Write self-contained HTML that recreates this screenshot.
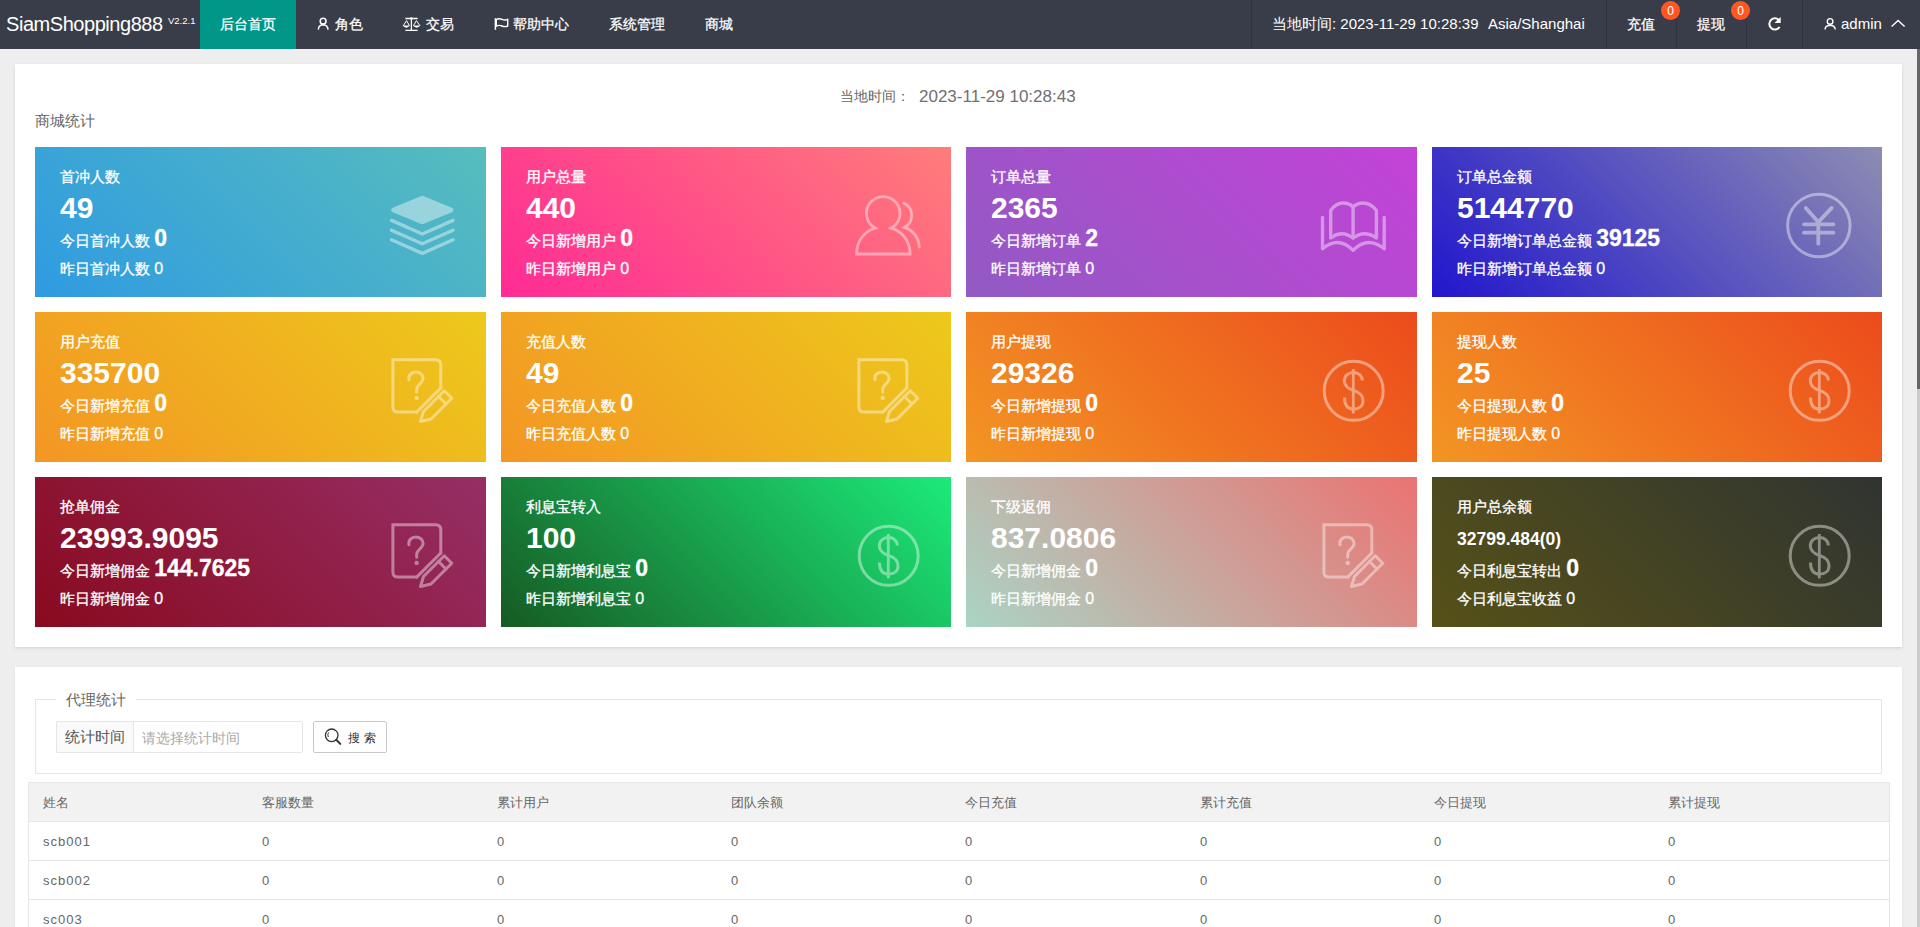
<!DOCTYPE html>
<html><head><meta charset="utf-8">
<style>
*{box-sizing:border-box;margin:0;padding:0}
html,body{width:1920px;height:927px;overflow:hidden;background:#eeeeee;font-family:"Liberation Sans",sans-serif;color:#666}
.abs{position:absolute}
#hdr{position:absolute;left:0;top:0;width:1920px;height:49px;background:#393D49}
#hdr .t{position:absolute;color:#fff;font-size:14px;line-height:16px;white-space:nowrap}
.sep{position:absolute;top:0;width:1px;height:49px;background:#2f323c}
.badge{position:absolute;z-index:2;width:19px;height:19px;border-radius:50%;background:#FF5722;color:#fff;font-size:12px;line-height:21px;text-align:center}
#p1{position:absolute;left:15px;top:64px;width:1887px;height:583px;background:#fff;box-shadow:0 1px 3px rgba(0,0,0,.12)}
#p2{position:absolute;left:15px;top:667px;width:1887px;height:300px;background:#fff;box-shadow:0 1px 3px rgba(0,0,0,.08)}
.card{position:absolute;width:451px;height:150px;color:#fff;overflow:hidden}
.card .ti,.card .l2,.card .l3{-webkit-text-stroke:0.3px #fff}
.card .ti{position:absolute;left:25px;top:22px;font-size:15px;line-height:16px;white-space:nowrap}
.card .num{position:absolute;left:25px;top:45px;font-size:30px;line-height:32px;font-weight:bold;white-space:nowrap}
.card .num.sm{font-size:17.5px;top:46px}
.card .l2{position:absolute;left:25px;top:81px;font-size:15px;line-height:20px;white-space:nowrap}
.card .l2 b{font-size:23px;font-weight:bold;line-height:20px}
.card .l3{position:absolute;left:25px;top:114px;font-size:15px;line-height:16px;white-space:nowrap}
.card .l3 i{font-style:normal;font-size:16px}
.card svg{position:absolute}
#scroll{position:absolute;left:1917px;top:49px;width:3px;height:878px;background:#cbcbcb}
#thumb{position:absolute;left:1917px;top:49px;width:3px;height:340px;background:#666}
.tt{font-size:13px;line-height:20px;color:#666;white-space:nowrap}
.tn{letter-spacing:1px}
</style></head><body>
<div id="hdr">
  <div class="t" style="left:6px;top:13px;font-size:20px;line-height:22px;letter-spacing:-0.45px">SiamShopping888</div>
  <div class="t" style="left:168px;top:15px;font-size:9.5px;line-height:12px">V2.2.1</div>
  <div class="abs" style="left:200px;top:0;width:96px;height:49px;background:#009688"></div>
  <div class="t" style="left:220px;top:16px;-webkit-text-stroke:0.25px #fff">后台首页</div>
  <div class="t" style="left:335px;top:16px;-webkit-text-stroke:0.25px #fff">角色</div>
  <div class="t" style="left:426px;top:16px;-webkit-text-stroke:0.25px #fff">交易</div>
  <div class="t" style="left:513px;top:16px;-webkit-text-stroke:0.25px #fff">帮助中心</div>
  <div class="t" style="left:609px;top:16px;-webkit-text-stroke:0.25px #fff">系统管理</div>
  <div class="t" style="left:705px;top:16px;-webkit-text-stroke:0.25px #fff">商城</div>
  <div class="sep" style="left:1251px"></div>
  <div class="t" style="left:1272px;top:16px;font-size:15px">当地时间: 2023-11-29 10:28:39</div>
  <div class="t" style="left:1488px;top:16px;font-size:15px">Asia/Shanghai</div>
  <div class="sep" style="left:1606px"></div>
  <div class="t" style="left:1627px;top:16px;-webkit-text-stroke:0.25px #fff">充值</div>
  <div class="badge" style="left:1661px;top:1px">0</div>
  <div class="sep" style="left:1676px"></div>
  <div class="t" style="left:1697px;top:16px;-webkit-text-stroke:0.25px #fff">提现</div>
  <div class="badge" style="left:1731px;top:1px">0</div>
  <div class="sep" style="left:1746px"></div>
  <div class="sep" style="left:1802px"></div>
  <div class="t" style="left:1841px;top:16px;font-size:15px">admin</div>
  <svg class="abs" style="left:312px;top:14px" width="22" height="20" viewBox="0 0 22 20"><g fill="none" stroke="#fff" stroke-width="1.5"><circle cx="11.1" cy="7.2" r="2.9"/><path d="M6.3 15.6 Q6.6 11 11.1 10.8 Q15.6 11 16.1 15.6"/></g></svg>
  <svg class="abs" style="left:398px;top:10px" width="28" height="26" viewBox="0 0 28 26"><g fill="none" stroke="#fff"><path d="M7.4 8.5 L19.6 8.5 M13.4 8.5 L13.4 20.4 M7.4 20.4 L19.6 20.4" stroke-width="1.3"/><path d="M5.2 15.9 L8.6 10.6 L11.5 15.9 M15.4 15.9 L18.4 10.6 L22 15.9" stroke-width="1"/></g><path d="M4.6 15.6 L11.9 15.6 Q8.3 19.9 4.6 15.6 Z M14.9 15.6 L22.5 15.6 Q18.7 19.9 14.9 15.6 Z" fill="#fff"/><circle cx="13.4" cy="8.5" r="1.2" fill="#fff"/></svg>
  <svg class="abs" style="left:488px;top:10px" width="26" height="26" viewBox="0 0 26 26"><g fill="none" stroke="#fff" stroke-width="1.5"><path d="M7.4 8.2 L7.4 19.8"/><path d="M8.3 9.4 Q11 8.2 14 9.4 Q17 10.6 19.7 9.4 L19.7 16 Q17 17.2 14 16 Q11 14.8 8.3 16 Z" stroke-width="1.4"/></g></svg>
  <svg class="abs" style="left:1760px;top:10px" width="28" height="28" viewBox="0 0 28 28"><g fill="none" stroke="#fff" stroke-width="2"><path d="M19.3 10.4 A5.6 5.6 0 1 0 19.6 17.0"/></g><path d="M14.4 12.9 L20.7 12.9 L20.7 6.9 Z" fill="#fff"/></svg>
  <svg class="abs" style="left:1820px;top:12px" width="20" height="22" viewBox="0 0 20 22"><g fill="none" stroke="#fff" stroke-width="1.4"><circle cx="10.1" cy="9.4" r="2.8"/><path d="M5 17.5 Q5.3 13.4 10.1 13.2 Q14.9 13.4 15.3 17.5"/></g></svg>
  <svg class="abs" style="left:1888px;top:16px" width="20" height="14" viewBox="0 0 20 14"><path d="M3.6 10.6 L10.1 4.4 L16.6 10.6" fill="none" stroke="#fff" stroke-width="1.4"/></svg>

</div>

<div id="p1">
  <div class="abs" style="left:825px;top:24px;font-size:14px;line-height:16px;color:#666;white-space:nowrap">当地时间：</div><div class="abs" style="left:904px;top:23px;font-size:17px;line-height:20px;color:#707070;white-space:nowrap">2023-11-29 10:28:43</div>
  <div class="abs" style="left:20px;top:49px;font-size:15px;line-height:16px;color:#666;white-space:nowrap">商城统计</div>
</div>

<div class="card" style="left:35px;top:147px;width:451px;background:linear-gradient(45deg,#2f9be1,#57bdbd)"><div class="ti">首冲人数</div><div class="num">49</div><div class="l2">今日首冲人数 <b>0</b></div><div class="l3">昨日首冲人数 <i>0</i></div><svg width="100" height="100" style="left:340px;top:30px;opacity:0.42" viewBox="0 0 100 100"><path d="M47.3 21.2 L75.8 33 L47.3 44.8 L18.8 33 Z" fill="#fff" stroke="#fff" stroke-width="5" stroke-linejoin="round"/><g fill="none" stroke="#fff" stroke-width="3.4" stroke-linecap="round" stroke-linejoin="round"><path d="M16.5 43.4 L47.3 57 L78 43.4"/><path d="M16.5 53.2 L47.3 66.8 L78 53.2"/><path d="M16.5 62.8 L47.3 76.4 L78 62.8"/></g></svg></div>
<div class="card" style="left:501px;top:147px;width:450px;background:linear-gradient(45deg,#ff2b94,#ff7d7a)"><div class="ti">用户总量</div><div class="num">440</div><div class="l2">今日新增用户 <b>0</b></div><div class="l3">昨日新增用户 <i>0</i></div><svg width="100" height="100" style="left:340px;top:30px;opacity:0.42" viewBox="0 0 100 100"><g fill="none" stroke="#fff" stroke-width="2.8" stroke-linejoin="miter"><path d="M34.2 51.1 A16.8 16.8 0 1 1 50.2 51.1 C61 54 69.1 64 69.1 77 L15.6 77 C15.6 64 23.5 54 34.2 51.1 Z"/><path d="M62.7 26.1 A13.5 13.5 0 0 1 63.5 50.3 C72 53 78.2 61 78.2 70.1" stroke-linecap="round"/></g></svg></div>
<div class="card" style="left:966px;top:147px;width:451px;background:linear-gradient(45deg,#915ac3,#c442d8)"><div class="ti">订单总量</div><div class="num">2365</div><div class="l2">今日新增订单 <b>2</b></div><div class="l3">昨日新增订单 <i>0</i></div><svg width="100" height="100" style="left:340px;top:30px;opacity:0.42" viewBox="0 0 100 100"><g fill="none" stroke="#fff" stroke-width="3.4" stroke-linecap="round" stroke-linejoin="round"><path d="M24.7 60.8 L24.7 33.5 Q30 26 37 26 Q43.5 26 47.1 30 Q51 26 57.5 26 Q64.5 26 70.4 33.5 L70.4 60.8"/><path d="M47.1 30 L47.1 61"/><path d="M24.9 60.8 Q36 52.5 47.1 61 Q58 52.5 70.2 60.8"/><path d="M16.5 40.4 L16.5 71.8 Q32 58.5 47.1 73.2 Q62 58.5 78.2 71.8 L78.2 40.4"/></g></svg></div>
<div class="card" style="left:1432px;top:147px;width:450px;background:linear-gradient(45deg,#2116cd,#8d8cb2)"><div class="ti">订单总金额</div><div class="num">5144770</div><div class="l2">今日新增订单总金额 <b>39125</b></div><div class="l3">昨日新增订单总金额 <i>0</i></div><svg width="100" height="100" style="left:340px;top:30px;opacity:0.42" viewBox="0 0 100 100"><g fill="none" stroke="#fff" stroke-linecap="round"><circle cx="46.85" cy="48.5" r="31.2" stroke-width="3"/><path d="M33.8 30.9 L46.3 45.1 L59.7 30.9 M46.3 45.1 L46.3 66.7 M32 47.3 L61.4 47.3 M32 55.7 L61.4 55.7" stroke-width="3.8"/></g></svg></div>
<div class="card" style="left:35px;top:312px;width:451px;background:linear-gradient(45deg,#f39624,#edc91b)"><div class="ti">用户充值</div><div class="num">335700</div><div class="l2">今日新增充值 <b>0</b></div><div class="l3">昨日新增充值 <i>0</i></div><svg width="100" height="100" style="left:340px;top:30px;opacity:0.42" viewBox="0 0 100 100"><g fill="none" stroke="#fff" stroke-width="3" stroke-linejoin="round" stroke-linecap="round"><path d="M41.7 70.1 L23 70.1 Q17.9 70.1 17.9 65 L17.9 17.7 L60.8 17.7 Q65.8 17.7 65.8 22.7 L65.8 46" stroke-linejoin="miter"/><path d="M41.7 70.1 L65.8 46" /><path d="M33.9 37.8 C33.2 33 36.5 30 40.8 30 C45 30 48.1 33 48.1 36.5 C48.1 41 41.7 43 41.7 47.2 L41.7 50.3"/><circle cx="41.7" cy="55.9" r="2.2" fill="#fff" stroke="none"/><path d="M48.5 69.5 L69.3 48.8 L76.8 56.3 L56 77 L45.5 79.5 Z"/><path d="M63.5 54.5 L71 62"/></g></svg></div>
<div class="card" style="left:501px;top:312px;width:450px;background:linear-gradient(45deg,#f39624,#edc91b)"><div class="ti">充值人数</div><div class="num">49</div><div class="l2">今日充值人数 <b>0</b></div><div class="l3">昨日充值人数 <i>0</i></div><svg width="100" height="100" style="left:340px;top:30px;opacity:0.42" viewBox="0 0 100 100"><g fill="none" stroke="#fff" stroke-width="3" stroke-linejoin="round" stroke-linecap="round"><path d="M41.7 70.1 L23 70.1 Q17.9 70.1 17.9 65 L17.9 17.7 L60.8 17.7 Q65.8 17.7 65.8 22.7 L65.8 46" stroke-linejoin="miter"/><path d="M41.7 70.1 L65.8 46" /><path d="M33.9 37.8 C33.2 33 36.5 30 40.8 30 C45 30 48.1 33 48.1 36.5 C48.1 41 41.7 43 41.7 47.2 L41.7 50.3"/><circle cx="41.7" cy="55.9" r="2.2" fill="#fff" stroke="none"/><path d="M48.5 69.5 L69.3 48.8 L76.8 56.3 L56 77 L45.5 79.5 Z"/><path d="M63.5 54.5 L71 62"/></g></svg></div>
<div class="card" style="left:966px;top:312px;width:451px;background:linear-gradient(45deg,#f39524,#ec4b1c)"><div class="ti">用户提现</div><div class="num">29326</div><div class="l2">今日新增提现 <b>0</b></div><div class="l3">昨日新增提现 <i>0</i></div><svg width="100" height="100" style="left:340px;top:30px;opacity:0.42" viewBox="0 0 100 100"><g fill="none" stroke="#fff"><circle cx="47.7" cy="48.85" r="29.5" stroke-width="3"/><path d="M47.3 27 L47.3 71.4" stroke-width="2.8"/><path d="M56.3 38.5 C56.3 33.5 52 30.5 47.5 30.5 C42 30.5 38.3 34 38.3 39 C38.3 44 42 46.5 47.5 48.5 C53.5 50.5 57 53 57 59 C57 64 53 67.1 47.5 67.1 C42 67.1 38.5 63.5 38.5 55.5" stroke-width="3"/></g></svg></div>
<div class="card" style="left:1432px;top:312px;width:450px;background:linear-gradient(45deg,#f39524,#ec4b1c)"><div class="ti">提现人数</div><div class="num">25</div><div class="l2">今日提现人数 <b>0</b></div><div class="l3">昨日提现人数 <i>0</i></div><svg width="100" height="100" style="left:340px;top:30px;opacity:0.42" viewBox="0 0 100 100"><g fill="none" stroke="#fff"><circle cx="47.7" cy="48.85" r="29.5" stroke-width="3"/><path d="M47.3 27 L47.3 71.4" stroke-width="2.8"/><path d="M56.3 38.5 C56.3 33.5 52 30.5 47.5 30.5 C42 30.5 38.3 34 38.3 39 C38.3 44 42 46.5 47.5 48.5 C53.5 50.5 57 53 57 59 C57 64 53 67.1 47.5 67.1 C42 67.1 38.5 63.5 38.5 55.5" stroke-width="3"/></g></svg></div>
<div class="card" style="left:35px;top:477px;width:451px;background:linear-gradient(45deg,#890a1f,#962f66)"><div class="ti">抢单佣金</div><div class="num">23993.9095</div><div class="l2">今日新增佣金 <b>144.7625</b></div><div class="l3">昨日新增佣金 <i>0</i></div><svg width="100" height="100" style="left:340px;top:30px;opacity:0.42" viewBox="0 0 100 100"><g fill="none" stroke="#fff" stroke-width="3" stroke-linejoin="round" stroke-linecap="round"><path d="M41.7 70.1 L23 70.1 Q17.9 70.1 17.9 65 L17.9 17.7 L60.8 17.7 Q65.8 17.7 65.8 22.7 L65.8 46" stroke-linejoin="miter"/><path d="M41.7 70.1 L65.8 46" /><path d="M33.9 37.8 C33.2 33 36.5 30 40.8 30 C45 30 48.1 33 48.1 36.5 C48.1 41 41.7 43 41.7 47.2 L41.7 50.3"/><circle cx="41.7" cy="55.9" r="2.2" fill="#fff" stroke="none"/><path d="M48.5 69.5 L69.3 48.8 L76.8 56.3 L56 77 L45.5 79.5 Z"/><path d="M63.5 54.5 L71 62"/></g></svg></div>
<div class="card" style="left:501px;top:477px;width:450px;background:linear-gradient(45deg,#165a23,#1ceb79)"><div class="ti">利息宝转入</div><div class="num">100</div><div class="l2">今日新增利息宝 <b>0</b></div><div class="l3">昨日新增利息宝 <i>0</i></div><svg width="100" height="100" style="left:340px;top:30px;opacity:0.42" viewBox="0 0 100 100"><g fill="none" stroke="#fff"><circle cx="47.7" cy="48.85" r="29.5" stroke-width="3"/><path d="M47.3 27 L47.3 71.4" stroke-width="2.8"/><path d="M56.3 38.5 C56.3 33.5 52 30.5 47.5 30.5 C42 30.5 38.3 34 38.3 39 C38.3 44 42 46.5 47.5 48.5 C53.5 50.5 57 53 57 59 C57 64 53 67.1 47.5 67.1 C42 67.1 38.5 63.5 38.5 55.5" stroke-width="3"/></g></svg></div>
<div class="card" style="left:966px;top:477px;width:451px;background:linear-gradient(45deg,#aad4c4,#eb7372)"><div class="ti">下级返佣</div><div class="num">837.0806</div><div class="l2">今日新增佣金 <b>0</b></div><div class="l3">昨日新增佣金 <i>0</i></div><svg width="100" height="100" style="left:340px;top:30px;opacity:0.42" viewBox="0 0 100 100"><g fill="none" stroke="#fff" stroke-width="3" stroke-linejoin="round" stroke-linecap="round"><path d="M41.7 70.1 L23 70.1 Q17.9 70.1 17.9 65 L17.9 17.7 L60.8 17.7 Q65.8 17.7 65.8 22.7 L65.8 46" stroke-linejoin="miter"/><path d="M41.7 70.1 L65.8 46" /><path d="M33.9 37.8 C33.2 33 36.5 30 40.8 30 C45 30 48.1 33 48.1 36.5 C48.1 41 41.7 43 41.7 47.2 L41.7 50.3"/><circle cx="41.7" cy="55.9" r="2.2" fill="#fff" stroke="none"/><path d="M48.5 69.5 L69.3 48.8 L76.8 56.3 L56 77 L45.5 79.5 Z"/><path d="M63.5 54.5 L71 62"/></g></svg></div>
<div class="card" style="left:1432px;top:477px;width:450px;background:linear-gradient(45deg,#565118,#303431)"><div class="ti">用户总余额</div><div class="num sm">32799.484(0)</div><div class="l2">今日利息宝转出 <b>0</b></div><div class="l3">今日利息宝收益 <i>0</i></div><svg width="100" height="100" style="left:340px;top:30px;opacity:0.42" viewBox="0 0 100 100"><g fill="none" stroke="#fff"><circle cx="47.7" cy="48.85" r="29.5" stroke-width="3"/><path d="M47.3 27 L47.3 71.4" stroke-width="2.8"/><path d="M56.3 38.5 C56.3 33.5 52 30.5 47.5 30.5 C42 30.5 38.3 34 38.3 39 C38.3 44 42 46.5 47.5 48.5 C53.5 50.5 57 53 57 59 C57 64 53 67.1 47.5 67.1 C42 67.1 38.5 63.5 38.5 55.5" stroke-width="3"/></g></svg></div>


<div id="p2"></div>
<div class="abs" style="left:35px;top:699px;width:1847px;height:75px;border:1px solid #e6e6e6"></div>
<div class="abs" style="left:56px;top:690px;width:80px;height:20px;background:#fff"></div>
<div class="abs" style="left:66px;top:690px;font-size:15px;line-height:20px;color:#666;white-space:nowrap">代理统计</div>
<div class="abs" style="left:56px;top:721px;width:78px;height:32px;background:#fafafa;border:1px solid #e6e6e6;border-right:none;border-radius:2px 0 0 2px"></div>
<div class="abs" style="left:65px;top:727px;font-size:15px;line-height:20px;color:#555;white-space:nowrap">统计时间</div>
<div class="abs" style="left:133px;top:721px;width:170px;height:32px;background:#fff;border:1px solid #e6e6e6;border-radius:0 2px 2px 0"></div>
<div class="abs" style="left:142px;top:728px;font-size:14px;line-height:20px;color:#a9a9a9;white-space:nowrap">请选择统计时间</div>
<div class="abs" style="left:313px;top:721px;width:74px;height:32px;background:#fff;border:1px solid #c9c9c9;border-radius:2px"></div>
<svg class="abs" style="left:322px;top:727px" width="22" height="20" viewBox="0 0 22 20"><g fill="none" stroke="#333" stroke-width="1.3"><circle cx="9.7" cy="8.3" r="6.3"/><path d="M14.2 12.8 L18.3 16.9" stroke-width="2" stroke-linecap="round"/><path d="M6.5 5.5 Q5.2 7.5 6.3 10" stroke-width="1"/></g></svg>
<div class="abs" style="left:348px;top:728px;font-size:12px;line-height:20px;color:#333;letter-spacing:4px;white-space:nowrap">搜索</div>
<div class="abs" style="left:28px;top:782px;width:1862px;height:160px;border:1px solid #e6e6e6;border-bottom:none"></div>
<div class="abs" style="left:29px;top:783px;width:1860px;height:38px;background:#f2f2f2"></div>
<div class="abs" style="left:29px;top:821px;width:1860px;height:1px;background:#e6e6e6"></div>
<div class="abs" style="left:29px;top:860px;width:1860px;height:1px;background:#e6e6e6"></div>
<div class="abs" style="left:29px;top:899px;width:1860px;height:1px;background:#e6e6e6"></div>
<div class="abs tt" style="left:43px;top:793px">姓名</div>
<div class="abs tt" style="left:262px;top:793px">客服数量</div>
<div class="abs tt" style="left:497px;top:793px">累计用户</div>
<div class="abs tt" style="left:731px;top:793px">团队余额</div>
<div class="abs tt" style="left:965px;top:793px">今日充值</div>
<div class="abs tt" style="left:1200px;top:793px">累计充值</div>
<div class="abs tt" style="left:1434px;top:793px">今日提现</div>
<div class="abs tt" style="left:1668px;top:793px">累计提现</div>
<div class="abs tt tn" style="left:43px;top:832px">scb001</div>
<div class="abs tt" style="left:262px;top:832px">0</div>
<div class="abs tt" style="left:497px;top:832px">0</div>
<div class="abs tt" style="left:731px;top:832px">0</div>
<div class="abs tt" style="left:965px;top:832px">0</div>
<div class="abs tt" style="left:1200px;top:832px">0</div>
<div class="abs tt" style="left:1434px;top:832px">0</div>
<div class="abs tt" style="left:1668px;top:832px">0</div>
<div class="abs tt tn" style="left:43px;top:871px">scb002</div>
<div class="abs tt" style="left:262px;top:871px">0</div>
<div class="abs tt" style="left:497px;top:871px">0</div>
<div class="abs tt" style="left:731px;top:871px">0</div>
<div class="abs tt" style="left:965px;top:871px">0</div>
<div class="abs tt" style="left:1200px;top:871px">0</div>
<div class="abs tt" style="left:1434px;top:871px">0</div>
<div class="abs tt" style="left:1668px;top:871px">0</div>
<div class="abs tt tn" style="left:43px;top:910px">sc003</div>
<div class="abs tt" style="left:262px;top:910px">0</div>
<div class="abs tt" style="left:497px;top:910px">0</div>
<div class="abs tt" style="left:731px;top:910px">0</div>
<div class="abs tt" style="left:965px;top:910px">0</div>
<div class="abs tt" style="left:1200px;top:910px">0</div>
<div class="abs tt" style="left:1434px;top:910px">0</div>
<div class="abs tt" style="left:1668px;top:910px">0</div>
<div id="scroll"></div><div id="thumb"></div>
</body></html>
